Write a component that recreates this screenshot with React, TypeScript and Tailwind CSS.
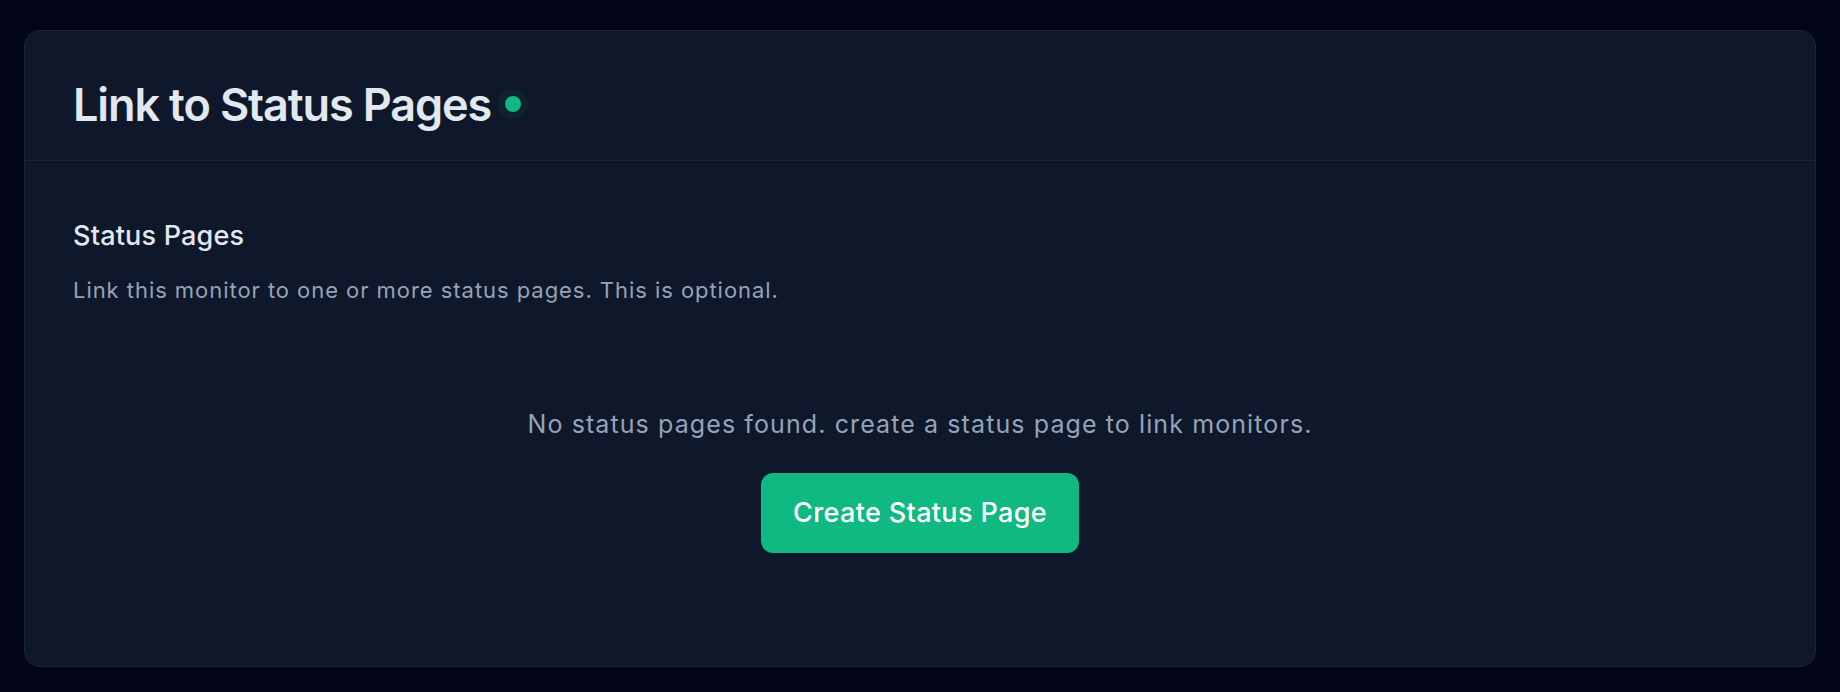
import React from "react";

export default function App() {
  return (
    <div
      className="min-h-screen bg-[#020617] px-6 pt-[30px] pb-[25px]"
      style={{ fontFamily: "Inter, 'Noto Sans', sans-serif" }}
    >
      <div className="flex h-[637px] flex-col rounded-2xl border border-[#1c2536] bg-[#0f172a]">
        <div className="flex items-center border-b border-[#1c2536] px-12 pt-[47px] pb-[28px]">
          <h2 className="text-[45px] leading-[54px] font-semibold tracking-tight text-[#e2e8f0]">
            Link to Status Pages
          </h2>
          <span className="ml-[14px] mt-[-2px] block h-4 w-4 rounded-full bg-[#10b981] shadow-[0_0_0_7px_rgba(16,185,129,0.07)]" />
        </div>
        <div className="px-12 pt-[54px]">
          <h3 className="text-[27px] leading-[42px] font-medium tracking-[0.2px] text-[#e2e8f0]">
            Status Pages
          </h3>
          <p className="mt-[18px] text-[22px] leading-[30px] tracking-[0.95px] text-[#94a3b8]">
            Link this monitor to one or more status pages. This is optional.
          </p>
          <div className="mt-[101px] flex flex-col items-center">
            <p className="text-[25px] leading-[36px] tracking-[1.1px] text-[#94a3b8]">
              No status pages found. create a status page to link monitors.
            </p>
            <button className="mt-[31px] rounded-[12px] bg-[#10b981] px-[32px] py-[19px] text-[27px] leading-[42px] font-medium tracking-[0.35px] text-white">
              Create Status Page
            </button>
          </div>
        </div>
      </div>
    </div>
  );
}
